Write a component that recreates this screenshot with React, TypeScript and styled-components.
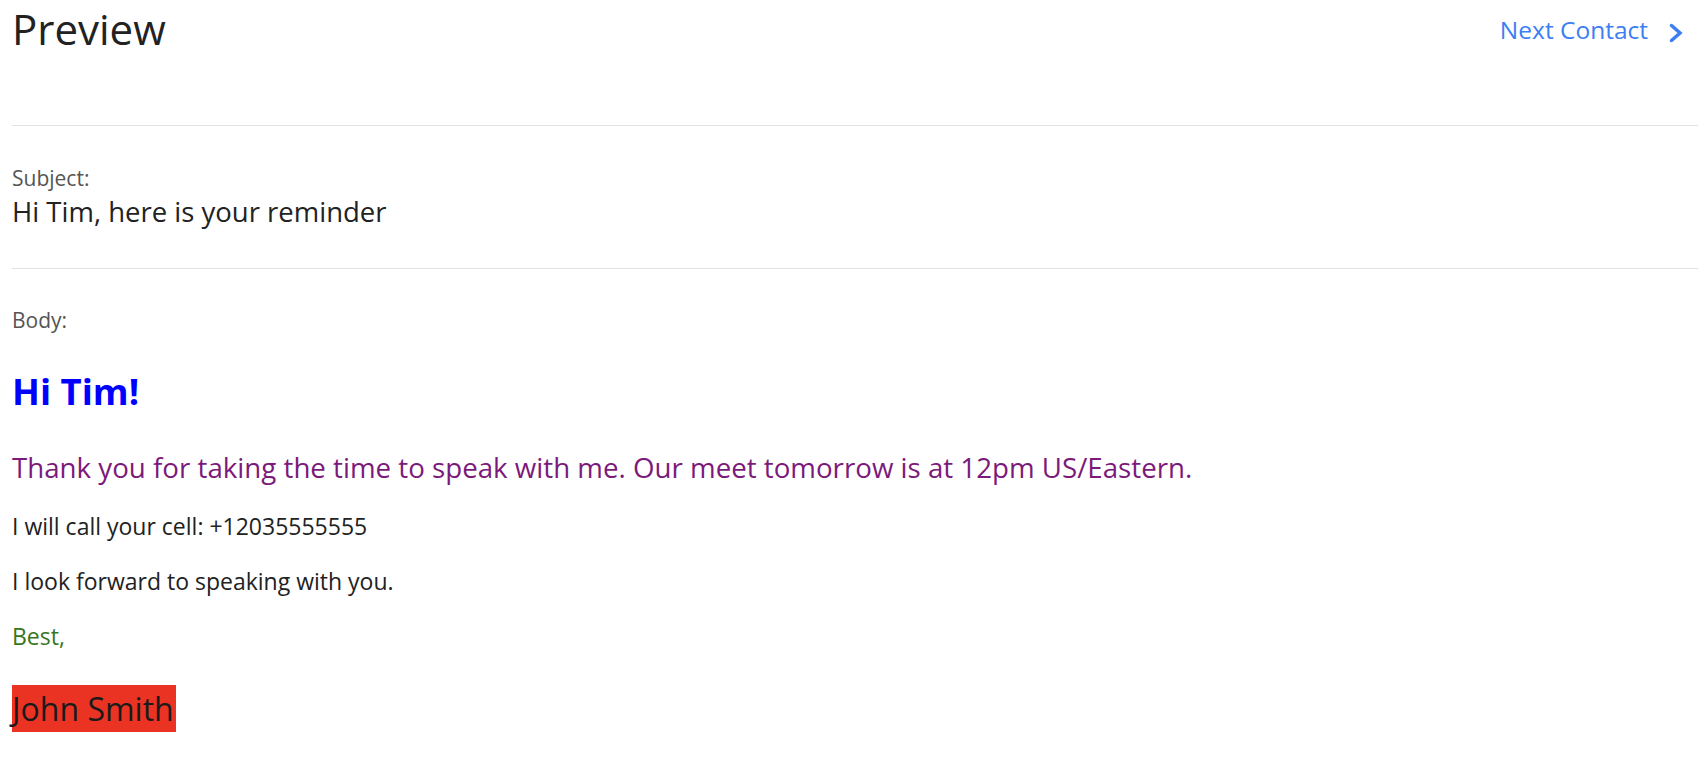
import React, { FC } from "react";
import styled, { createGlobalStyle } from "styled-components";

const GlobalStyle = createGlobalStyle`
  html, body {
    margin: 0;
    padding: 0;
    background: #ffffff;
  }

  body {
    font-family: "Open Sans", "Noto Sans", "Liberation Sans", sans-serif;
    color: #222222;
  }
`;

const App: FC = () => {
  return (
    <>
      <GlobalStyle />
      <Page>
        <Header>
          <Title>Preview</Title>
          <NextLink href="#">
            Next Contact
            <svg width="16" height="20" viewBox="0 0 16 20" fill="none">
              <path
                d="M3.5 2.5 L12 10 L3.5 17.5"
                stroke="currentColor"
                strokeWidth="3.5"
                strokeLinecap="round"
                strokeLinejoin="miter"
              />
            </svg>
          </NextLink>
        </Header>
        <Divider />
        <Section>
          <Label>Subject:</Label>
          <SubjectText>Hi Tim, here is your reminder</SubjectText>
        </Section>
        <Divider />
        <BodySection>
          <Label>Body:</Label>
          <Greeting>Hi Tim!</Greeting>
          <Lead>
            Thank you for taking the time to speak with me. Our meet tomorrow
            is at 12pm US/Eastern.
          </Lead>
          <Para $first>I will call your cell: +12035555555</Para>
          <Para>I look forward to speaking with you.</Para>
          <Para $color="#38761d">Best,</Para>
          <Signature>John Smith</Signature>
        </BodySection>
      </Page>
    </>
  );
};

const Page = styled.div`
  padding-left: 12px;
  min-height: 758px;
  box-sizing: border-box;
`;

const Header = styled.div`
  display: flex;
  justify-content: space-between;
  align-items: flex-start;
  height: 125px;
  padding-right: 14px;
`;

const Title = styled.h1`
  margin: 5px 0 0;
  font-size: 42px;
  font-weight: 400;
  line-height: 48px;
  color: #222222;
`;

const NextLink = styled.a`
  display: flex;
  align-items: center;
  gap: 20px;
  margin-top: 14px;
  font-size: 24.5px;
  line-height: 32px;
  color: #3d7ef2;
  text-decoration: none;

  svg {
    margin-top: 5px;
  }
`;

const Divider = styled.hr`
  margin: 0;
  border: 0;
  border-top: 1px solid #e3e3e3;
`;

const Section = styled.div`
  display: flex;
  flex-direction: column;
  height: 142px;
  padding-top: 40px;
  box-sizing: border-box;
`;

const Label = styled.div`
  font-size: 21px;
  line-height: 24px;
  color: #555555;
`;

const SubjectText = styled.div`
  margin-top: 5px;
  font-size: 27.5px;
  line-height: 34px;
  color: #222222;
`;

const BodySection = styled.div`
  padding-top: 39px;
`;

const Greeting = styled.h2`
  margin: 37px 0 0;
  font-size: 36.5px;
  font-weight: 700;
  line-height: 44px;
  color: #0000ff;
`;

const Lead = styled.p`
  margin: 35px 0 0;
  font-size: 27.7px;
  line-height: 38px;
  color: #7b1a7b;
`;

const Para = styled.p<{ $color?: string; $first?: boolean }>`
  margin: ${(p) => (p.$first ? "24px" : "23px")} 0 0;
  font-size: 23px;
  line-height: 32px;
  color: ${(p) => p.$color ?? "#222222"};
`;

const Signature = styled.div`
  display: inline-block;
  margin-top: 33px;
  padding: 0 2px 0 0;
  font-size: 32px;
  line-height: 47px;
  color: #1a1a1a;
  background: #ea3323;
`;

export default App;
